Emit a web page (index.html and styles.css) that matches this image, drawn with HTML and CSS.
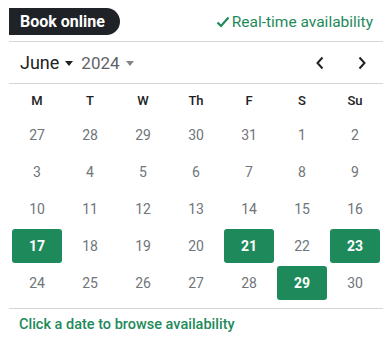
FILE: index.html
```html
<!DOCTYPE html>
<html>
<head>
  <title>Book online</title>
  <link rel="stylesheet" href="styles.css">
</head>
<body>
  <div class="widget">
    <div class="top-bar">
      <div class="pill">Book online</div>
      <div class="realtime">
        <svg class="check" width="14" height="12" viewBox="0 0 14 12"><path d="M1.5 6.5 L5 10 L12.5 1.5" fill="none" stroke="#1e8a5a" stroke-width="2.2"/></svg>
        Real-time availability
      </div>
    </div>

    <div class="month-bar">
      <div class="pickers">
        <span class="month">June</span>
        <svg class="caret" width="8" height="5" viewBox="0 0 8 5"><path d="M0 0 H8 L4 5 Z" fill="#202124"/></svg>
        <span class="year">2024</span>
        <svg class="caret" width="8" height="5" viewBox="0 0 8 5"><path d="M0 0 H8 L4 5 Z" fill="#80868b"/></svg>
      </div>
      <div class="nav">
        <button class="nav-btn"><svg width="10" height="14" viewBox="0 0 10 14"><path d="M7.5 1.5 L2.5 7 L7.5 12.5" fill="none" stroke="#202124" stroke-width="2"/></svg></button>
        <button class="nav-btn"><svg width="10" height="14" viewBox="0 0 10 14"><path d="M2.5 1.5 L7.5 7 L2.5 12.5" fill="none" stroke="#202124" stroke-width="2"/></svg></button>
      </div>
    </div>

    <div id="calendar" class="calendar"></div>

    <div class="footer">Click a date to browse availability</div>
  </div>

  <script>
  const calendar = document.getElementById("calendar");
  const weekdays = ["M", "T", "W", "Th", "F", "S", "Su"];
  const days = [27, 28, 29, 30, 31];
  for (let d = 1; d <= 30; d++) days.push(d);
  const available = [17, 21, 23, 29];

  weekdays.forEach(w => {
    const el = document.createElement("div");
    el.className = "weekday";
    el.innerText = w;
    calendar.appendChild(el);
  });

  days.forEach((d, i) => {
    const el = document.createElement("div");
    el.className = "day";
    // first five cells belong to May
    if (i >= 5 && available.includes(d)) el.className += " open";
    el.innerText = d;
    calendar.appendChild(el);
  });
  </script>
</body>
</html>
```

FILE: styles.css
```css
body {
  margin: 0;
  font-family: Roboto, "Liberation Sans", sans-serif;
  background: white;
}
.widget {
  width: 374px;
  margin-left: 9px;
  padding-top: 8px;
}
.top-bar {
  display: flex;
  justify-content: space-between;
  align-items: center;
  padding-bottom: 6px;
  border-bottom: 1px solid #d6d6d6;
}
.pill {
  height: 27px;
  line-height: 27px;
  padding: 0 15px 0 11px;
  background: #1f2327;
  color: white;
  font-size: 16px;
  font-weight: 700;
  border-radius: 0 14px 14px 0;
}
.realtime {
  display: flex;
  align-items: center;
  gap: 2px;
  color: #1e8a5a;
  font-size: 15.5px;
  padding-right: 10px;
}
.check {
  margin-top: 1px;
}
.month-bar {
  display: flex;
  justify-content: space-between;
  align-items: center;
  height: 41px;
  border-bottom: 1px solid #d6d6d6;
}
.pickers {
  display: flex;
  align-items: center;
  padding-left: 11px;
}
.month {
  font-size: 18px;
  color: #202124;
}
.year {
  font-size: 17px;
  color: #5f6368;
  margin-left: 8px;
}
.caret {
  margin-left: 6px;
  margin-top: 2px;
}
.nav {
  display: flex;
  gap: 18px;
  padding-right: 9px;
}
.nav-btn {
  width: 24px;
  height: 24px;
  padding: 0;
  border: none;
  background: none;
  display: flex;
  align-items: center;
  justify-content: center;
  cursor: pointer;
}
.calendar {
  display: grid;
  grid-template-columns: repeat(7, 50px);
  grid-template-rows: 30px;
  grid-auto-rows: 34px;
  gap: 3px;
  padding: 1px 3px 0;
  margin-bottom: 8px;
}
.weekday {
  display: flex;
  align-items: center;
  justify-content: center;
  font-size: 13px;
  font-weight: 500;
  color: #202124;
}
.day {
  display: flex;
  align-items: center;
  justify-content: center;
  font-size: 14px;
  color: #70757a;
  border-radius: 3px;
}
.day.open {
  background: #1e8a5c;
  color: white;
  font-weight: 700;
}
.footer {
  border-top: 1px solid #d6d6d6;
  padding: 7px 0 0 10px;
  color: #1e8a5a;
  font-size: 14.5px;
  font-weight: 500;
}
```
